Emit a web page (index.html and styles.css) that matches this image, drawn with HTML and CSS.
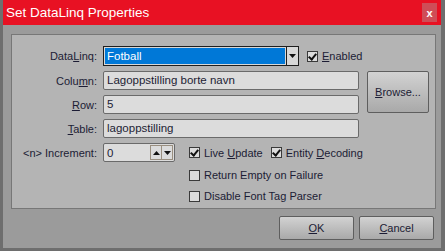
FILE: index.html
```html
<!DOCTYPE html>
<html lang="en">
<head>
    <meta charset="UTF-8">
    <title>Set DataLinq Properties</title>
    <link rel="stylesheet" href="styles.css">
</head>
<body>
    <div class="dialog">
        <div class="titlebar">
            <span class="title">Set DataLinq Properties</span>
            <span class="close">x</span>
        </div>
        <div class="content">
            <div class="panel">
                <label class="lbl">Data<u>L</u>inq:</label>
                <div class="wide line">
                    <div class="combo">
                        <span class="combo-value">Fotball</span>
                        <span class="combo-arrow"><svg width="7" height="4" viewBox="0 0 7 4"><path d="M0 0h7L3.5 4z" fill="#111"/></svg></span>
                    </div>
                    <label class="check"><span class="box on"></span><span><u>E</u>nabled</span></label>
                </div>

                <label class="lbl">Colu<u>m</u>n:</label>
                <div class="field">Lagoppstilling borte navn</div>
                <button class="btn browse"><u>B</u>rowse...</button>

                <label class="lbl"><u>R</u>ow:</label>
                <div class="field">5</div>

                <label class="lbl"><u>T</u>able:</label>
                <div class="field">lagoppstilling</div>

                <label class="lbl">&lt;n&gt; Increment:</label>
                <div class="wide line">
                    <div class="spin">
                        <span class="spin-value">0</span>
                        <span class="spin-btns">
                            <span class="spin-btn"><svg width="7" height="4" viewBox="0 0 7 4"><path d="M0 4h7L3.5 0z" fill="#111"/></svg></span>
                            <span class="spin-btn"><svg width="7" height="4" viewBox="0 0 7 4"><path d="M0 0h7L3.5 4z" fill="#111"/></svg></span>
                        </span>
                    </div>
                    <label class="check first"><span class="box on"></span><span>Live <u>U</u>pdate</span></label>
                    <label class="check"><span class="box on"></span><span>Entity <u>D</u>ecoding</span></label>
                </div>

                <div class="options">
                    <label class="check"><span class="box"></span><span>Return Empty on Failure</span></label>
                    <label class="check"><span class="box"></span><span>Disable Font Tag Parser</span></label>
                </div>
            </div>
            <div class="actions">
                <button class="btn"><u>O</u>K</button>
                <button class="btn"><u>C</u>ancel</button>
            </div>
        </div>
    </div>
</body>
</html>
```
FILE: styles.css
```css
body {
    margin: 0;
    width: 445px;
    height: 251px;
    background-color: #6e6e6e;
    font-family: "Liberation Sans", Arial, sans-serif;
    font-size: 11px;
    color: #1c1c34;
    overflow: hidden;
}
u {
    text-decoration: underline;
    text-underline-offset: 1px;
}
.dialog {
    margin-left: 3px;
    width: 438px;
    height: 248px;
    background: #9b9b9b;
    display: flex;
    flex-direction: column;
}
.titlebar {
    height: 25px;
    background: #e81123;
    display: flex;
    align-items: center;
    justify-content: space-between;
    padding-left: 3px;
}
.title {
    color: #fff;
    font-size: 13.5px;
}
.close {
    width: 15px;
    height: 19px;
    margin-right: 4px;
    background: #cf4d57;
    color: #fff;
    font-weight: bold;
    font-size: 11px;
    display: flex;
    align-items: center;
    justify-content: center;
}
.content {
    padding: 9px 5px 0 8px;
}
.panel {
    height: 175px;
    box-sizing: border-box;
    background: #b4b4b4;
    border: 1px solid #777;
    padding-top: 11px;
    display: grid;
    grid-template-columns: 85px 256px 62px;
    grid-template-rows: 20px 19px 19px 19px 19px auto;
    row-gap: 5px;
    column-gap: 6px;
    align-items: center;
}
.lbl {
    grid-column: 1;
    text-align: right;
}
.field {
    grid-column: 2;
}
.wide {
    grid-column: 2 / 4;
}
.line {
    display: flex;
    align-items: center;
}
.combo {
    width: 196px;
    height: 20px;
    box-sizing: border-box;
    border: 1px solid #1e1e1e;
    background: #d8d8d8;
    display: flex;
}
.combo-value {
    flex: 1;
    margin: 1px;
    background: #0078d7;
    color: #fff;
    padding-left: 2px;
    font-size: 11.5px;
    line-height: 16px;
}
.combo-arrow {
    width: 11px;
    border-left: 1px solid #1e1e1e;
    display: flex;
    align-items: center;
    justify-content: center;
}
.check {
    display: flex;
    align-items: center;
    gap: 4px;
    margin-left: 8px;
}
.box {
    width: 9px;
    height: 9px;
    border: 1px solid #3a3a3a;
    background: #dcdcdc;
    position: relative;
}
.box.on::after {
    content: "";
    position: absolute;
    left: 2px;
    top: 0;
    width: 3px;
    height: 6px;
    border: solid #111;
    border-width: 0 2px 2px 0;
    transform: rotate(40deg);
}
.field {
    height: 19px;
    box-sizing: border-box;
    border: 1px solid #6a6a6a;
    border-radius: 2px;
    background: #dcdcdc;
    padding-left: 3px;
    line-height: 17px;
    font-size: 11.5px;
}
.btn {
    font-family: inherit;
    font-size: 11px;
    color: #1c1c34;
    border: 1px solid #5e5e5e;
    border-radius: 2px;
    background: linear-gradient(#d2d2d2, #a9a9a9);
    padding: 0;
}
.browse {
    grid-column: 3;
    grid-row: 2 / 4;
    margin-left: 2px;
    width: 62px;
    height: 42px;
    align-self: start;
}
.spin {
    width: 72px;
    height: 19px;
    box-sizing: border-box;
    border: 1px solid #6a6a6a;
    border-radius: 2px;
    background: #dcdcdc;
    display: flex;
    align-items: center;
    padding: 0 1px 0 3px;
}
.spin-value {
    flex: 1;
    font-size: 11.5px;
}
.spin-btns {
    display: flex;
    border: 1px solid #9a8f80;
    height: 13px;
}
.spin-btn {
    width: 10px;
    display: flex;
    align-items: center;
    justify-content: center;
}
.spin-btn + .spin-btn {
    border-left: 1px solid #9a8f80;
}
.check.first {
    margin-left: 14px;
}
.options {
    grid-column: 2 / 4;
    align-self: start;
    padding-left: 86px;
    display: flex;
    flex-direction: column;
    gap: 9px;
    margin-top: 2px;
}
.options .check {
    margin-left: 0;
}
.actions {
    display: flex;
    justify-content: flex-end;
    gap: 5px;
    padding-top: 7px;
    padding-right: 2px;
}
.actions .btn {
    width: 75px;
    height: 24px;
}
```
